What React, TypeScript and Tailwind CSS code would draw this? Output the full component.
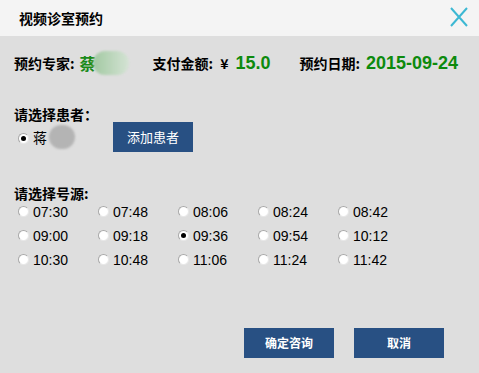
import React from "react";

const times = [
  "07:30", "07:48", "08:06", "08:24", "08:42",
  "09:00", "09:18", "09:36", "09:54", "10:12",
  "10:30", "10:48", "11:06", "11:24", "11:42",
];

function Radio({ checked }: { checked?: boolean }) {
  return (
    <span className="relative inline-block w-[11px] h-[11px] rounded-full bg-white border border-[#a8a8a8] border-r-[#e8e8e8] border-b-[#e8e8e8] shrink-0">
      {checked && (
        <span className="absolute left-[2px] top-[2px] w-[5px] h-[5px] rounded-full bg-black" />
      )}
    </span>
  );
}

export default function App() {
  const cjk = { fontFamily: '"Noto Sans CJK SC", "Liberation Sans", sans-serif' };
  return (
    <div className="w-[479px] h-[373px] bg-[#dedede] text-black overflow-hidden" style={cjk}>
      <div className="h-[36px] bg-[#f4f4f4] flex items-center justify-between pl-[19px] pr-[10px]">
        <span className="text-[14px] font-bold leading-none">视频诊室预约</span>
        <svg width="20" height="20" viewBox="0 0 20 20" className="mt-[-2px]">
          <path d="M2 1 L18 19 M18 1 L2 19" stroke="#3cb8d3" strokeWidth="2" fill="none" />
        </svg>
      </div>
      <div className="pl-[14px]">
        <div className="flex items-center h-[24px] mt-[15px] text-[14px] font-bold">
          <span>预约专家:</span>
          <span className="ml-[5px] text-[#1a8a1a] font-bold text-[16px]">蔡</span>
          <span className="w-[36px] h-[24px] rounded-full bg-gradient-to-r from-[#9cc79c] to-[#d4e4d4] opacity-90 ml-[-3px] blur-[1px]" />
          <span className="ml-[24px]">支付金额:</span>
          <span className="ml-[7px]">¥</span>
          <span className="ml-[7px] text-[18px] text-[#0d8a0d]" style={{ fontFamily: '"Liberation Sans", sans-serif' }}>15.0</span>
          <span className="ml-[29px]">预约日期:</span>
          <span className="ml-[6px] text-[18px] text-[#0d8a0d]" style={{ fontFamily: '"Liberation Sans", sans-serif' }}>2015-09-24</span>
        </div>
        <div className="mt-[31px] text-[14px] font-bold leading-[16px]">请选择患者：</div>
        <div className="flex items-center mt-[0px] h-[30px]">
          <span className="ml-[4px]"><Radio checked /></span>
          <span className="ml-[4px] text-[14px]">蒋</span>
          <span className="w-[26px] h-[24px] rounded-full bg-[#b4b4b4] blur-[1px] ml-[2px]" />
          <button className="ml-[38px] w-[80px] h-[30px] bg-[#285083] text-white text-[13px]">添加患者</button>
        </div>
        <div className="mt-[33px] text-[14px] font-bold leading-[16px]">请选择号源:</div>
        <div className="grid grid-cols-[repeat(5,80px)] mt-[-2px]">
          {times.map((t) => (
            <div key={t} className="flex items-center h-[24px] pl-[4px]">
              <Radio checked={t === "09:36"} />
              <span className="ml-[4px] text-[14px] mt-[3px]" style={{ fontFamily: '"Liberation Sans", sans-serif' }}>{t}</span>
            </div>
          ))}
        </div>
      </div>
      <div className="flex justify-end gap-[20px] pr-[35px] mt-[57px]">
        <button className="w-[90px] h-[30px] bg-[#285083] text-white text-[12px] font-bold">确定咨询</button>
        <button className="w-[90px] h-[30px] bg-[#285083] text-white text-[12px] font-bold">取消</button>
      </div>
    </div>
  );
}
